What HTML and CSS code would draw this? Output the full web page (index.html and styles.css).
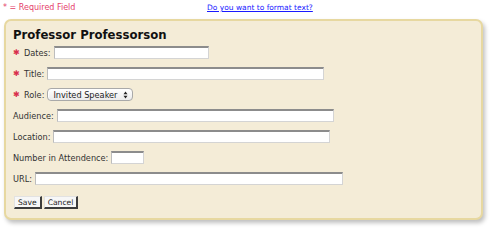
FILE: index.html
```html
<!DOCTYPE html>
<html>
<head>
<meta charset="utf-8">
<link rel="stylesheet" href="styles.css">
</head>
<body>
<div class="topbar">
  <span class="req-note">* = Required Field</span>
  <a class="fmt-link" href="#">Do you want to format text?</a>
</div>
<form class="panel">
  <h1 class="heading">Professor Professorson</h1>
  <div class="row">
    <span class="star">✱</span><label class="lbl">Dates:</label>
    <input class="field w-dates" type="text">
  </div>
  <div class="row">
    <span class="star">✱</span><label class="lbl">Title:</label>
    <input class="field w-long" type="text">
  </div>
  <div class="row">
    <span class="star">✱</span><label class="lbl">Role:</label>
    <span class="select-wrap">
      <select class="select"><option>Invited Speaker</option></select>
      <svg class="sel-arrows" width="5" height="8" viewBox="0 0 5 8"><path d="M0.5 3.2 L2.5 0.6 L4.5 3.2 Z M0.5 4.8 L2.5 7.4 L4.5 4.8 Z" fill="#222"/></svg>
    </span>
  </div>
  <div class="row">
    <label class="lbl">Audience:</label>
    <input class="field w-long" type="text">
  </div>
  <div class="row">
    <label class="lbl">Location:</label>
    <input class="field w-long" type="text">
  </div>
  <div class="row">
    <label class="lbl">Number in Attendence:</label>
    <input class="field w-num" type="text">
  </div>
  <div class="row">
    <label class="lbl">URL:</label>
    <input class="field w-url" type="text">
  </div>
  <div class="buttons">
    <button class="btn" type="button">Save</button>
    <button class="btn" type="button">Cancel</button>
  </div>
</form>
</body>
</html>
```
FILE: styles.css
```css
html, body {
  margin: 0;
  padding: 0;
  background: #ffffff;
}
body {
  width: 500px;
  height: 236px;
  font-family: "DejaVu Sans", Verdana, sans-serif;
  color: #333;
}
.topbar {
  display: flex;
  align-items: center;
  height: 15px;
  padding: 0 0 0 3px;
  font-size: 8px;
}
.req-note {
  color: #e5416a;
  width: 204px;
}
.fmt-link {
  color: #1a1aff;
  font-size: 7.5px;
  text-decoration: underline;
}
.panel {
  margin: 4px 0 0 4px;
  width: 479px;
  height: 201px;
  box-sizing: border-box;
  background: #f4ecd7;
  border: 2px solid #e7d8a0;
  border-radius: 7px;
  box-shadow: 2px 3px 4px rgba(0, 0, 0, 0.25);
  padding: 7px 0 0 7px;
}
.heading {
  margin: 0;
  font-size: 11.7px;
  line-height: 14px;
  font-weight: bold;
  color: #111;
}
.row {
  display: flex;
  align-items: center;
  height: 21px;
  font-size: 8.2px;
}
.star {
  color: #d9304c;
  font-size: 8px;
  width: 11px;
}
.lbl {
  color: #333;
  margin-right: 3px;
}
.field {
  box-sizing: border-box;
  height: 13px;
  margin: 0;
  padding: 0;
  background: #fff;
  border: 1px solid #d4d4d4;
  border-top: 2px solid #8c8c8c;
  border-left: 1px solid #bdbdbd;
}
.w-dates { width: 155px; }
.w-long { width: 277px; }
.w-num { width: 33px; }
.w-url { width: 308px; }
.select-wrap {
  position: relative;
  display: inline-block;
  height: 13px;
}
.select {
  appearance: none;
  -webkit-appearance: none;
  box-sizing: border-box;
  width: 86px;
  height: 13px;
  margin: 0;
  padding: 0 0 0 5px;
  font-family: "DejaVu Sans", Verdana, sans-serif;
  font-size: 8.2px;
  color: #222;
  border: 1px solid #a9a9a9;
  border-radius: 4px;
  background: linear-gradient(#ffffff, #ebebeb);
  box-shadow: inset 1px 0 0 #fff;
}
.sel-arrows {
  position: absolute;
  right: 5px;
  top: 2.5px;
}
.buttons {
  display: flex;
  gap: 2px;
  margin: 7px 0 0 1px;
}
.btn {
  box-sizing: border-box;
  height: 13px;
  margin: 0;
  padding: 0 3px;
  font-family: "DejaVu Sans", Verdana, sans-serif;
  font-size: 7.6px;
  line-height: 9px;
  color: #222;
  background: #f7f7f7;
  border-top: 1px solid #e2e2e2;
  border-left: 1px solid #e2e2e2;
  border-right: 2px solid #3c3c3c;
  border-bottom: 2px solid #3c3c3c;
}
```
